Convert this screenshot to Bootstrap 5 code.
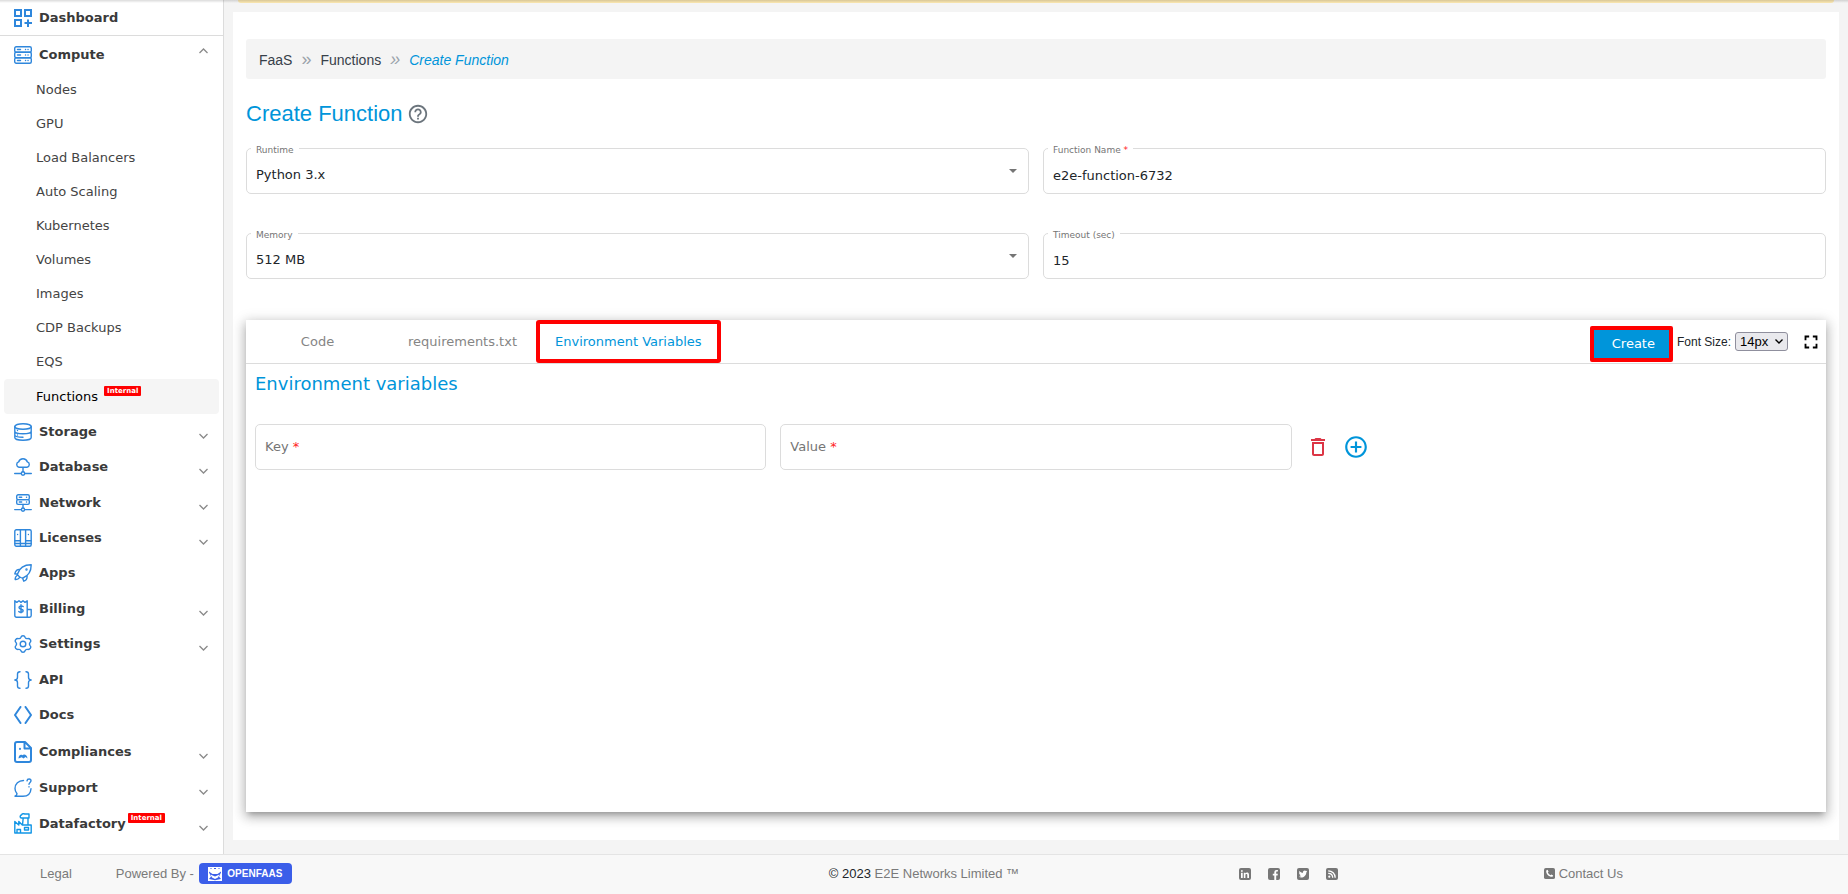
<!DOCTYPE html>
<html lang="en">
<head>
<meta charset="utf-8">
<meta name="viewport" content="width=device-width, initial-scale=1">
<title>Create Function</title>
<link href="https://cdn.jsdelivr.net/npm/bootstrap@5.3.0/dist/css/bootstrap.min.css" rel="stylesheet">
<style>
:root { --brand: #0095da; --line: #dcdcdc; --icon: #2f87dc; }
body { font: 13px/20px "DejaVu Sans", sans-serif; color: #212529; background: #f4f4f4; }
/* shadow cast by the header above the scrolled page */
body::before { content: ""; position: absolute; inset: 0 0 auto; height: 3px; background: linear-gradient(rgba(0,0,0,.14), rgba(0,0,0,0)); pointer-events: none; z-index: 5; }
.arial { font-family: "Liberation Sans", Arial, sans-serif; }
a { text-decoration: none; }

/* sidebar */
.sidebar { width: 224px; border-right: 1px solid var(--line); padding-bottom: 12px; }
.side-row { display: flex; align-items: center; padding: 0 15px 0 14px; color: #3a3a3a; font-weight: 700; }
.side-row .ico { width: 18px; flex: none; margin-right: 7px; color: var(--icon); fill: none; stroke: currentColor; stroke-width: 1.4; stroke-linejoin: round; stroke-linecap: round; }
.side-row .ico-square { stroke-width: 2; stroke-linejoin: miter; stroke-linecap: butt; }
.side-row .ico-bold { stroke-width: 2; }
.side-row .ico-factory { color: #1296e6; }
.side-row .chev { width: 9px; height: 6px; margin-left: auto; margin-top: 8px; fill: none; stroke: #8a8a8a; stroke-width: 1.3; }
.side-home { height: 36px; border-bottom: 1px solid var(--line); }
.side-open { height: 37px; }
.side-open .chev { margin-top: -7px; }
.side-sub a { display: flex; align-items: center; height: 34px; margin: 0 4px; padding-left: 32px; color: #444; border-radius: 4px; }
.side-sub a.current { height: 35px; background: #f5f5f5; color: #000; }
.tag { background: #f00; color: #fff; font-size: 7px; line-height: 10px; font-weight: 700; padding: 0 3px; border-radius: 1px; align-self: flex-start; }
.side-sub .tag { margin: 7px 0 0 6px; }
.side-row .tag { margin: 7px 0 0 2px; }

/* page */
.content { min-width: 0; padding: 0 9px 14px; }
.notice { height: 3px; margin: 0 5px 9px; background: #fbe7b0; border-radius: 0 0 3px 3px; }
.page { padding: 27px 13px 28px; }
.crumbs { --bs-breadcrumb-divider: "»"; --bs-breadcrumb-item-padding-x: 9px; --bs-breadcrumb-divider-color: #9aa2aa; height: 40px; padding: 2px 13px 0; background: #f4f4f4; border-radius: 3px; font-size: 14px; align-items: center; }
.crumbs .breadcrumb-item { display: flex; align-items: center; }
.crumbs .breadcrumb-item + .breadcrumb-item::before { font-size: 18px; line-height: 18px; margin-top: -2px; }
.crumbs a { color: #37404a; }
.crumbs .active { color: var(--brand); font-style: italic; }
.title-bar { height: 69px; }
.page-title { font-size: 22px; line-height: 26px; color: var(--brand); margin: 0; }
.form-grid { --bs-gutter-x: 14px; row-gap: 39px; }

.field { position: relative; height: 46px; }
.field .form-control, .field .form-select { height: 46px; padding: 8px 9px 0; font-size: 13px; border: 1px solid var(--line); border-radius: 5px; color: #212529; background-color: #fff; }
.field .form-select { background-image: url("data:image/svg+xml,%3Csvg xmlns='http://www.w3.org/2000/svg' viewBox='0 0 8 4'%3E%3Cpath fill='%23757575' d='M0 0h8L4 4z'/%3E%3C/svg%3E"); background-size: 8px 4px; background-position: right 11px center; }
.field label { position: absolute; left: 5px; top: -4px; padding: 0 5px; font-size: 9px; line-height: 12px; color: #757575; background: #fff; }
.field label.inside { top: 13px; font-size: 13px; line-height: 20px; background: none; pointer-events: none; }
.req { color: #f22; }

/* editor */
.editor { margin-top: 41px; box-shadow: 0 5px 5px -3px rgba(0,0,0,.2), 0 4px 10px 1px rgba(0,0,0,.2), 0 3px 14px 2px rgba(0,0,0,.12); }
.editor-head { height: 44px; border-bottom: 1px solid var(--line); }
.editor-tab { border: 0; background: none; padding: 0 19px; color: #858585; }
.editor-tab:first-child { min-width: 143px; }
.editor-tab.active { color: var(--brand); border: 4px solid #f00; border-radius: 3px; padding: 0 15px; }
.create-btn { height: 36px; padding: 0 14px 0 18px; border: 4px solid #f00; border-radius: 2px; background: var(--brand); color: #fff; }
.size-label { font-size: 12px; }
.size-select { width: 53px; height: 19px; padding: 0 4px; font-size: 13px; line-height: 17px; color: #000; border: 1px solid #8f8f9d; border-radius: 3px; appearance: none; background: #e9e9ed url("data:image/svg+xml,%3Csvg xmlns='http://www.w3.org/2000/svg' viewBox='0 0 8 5'%3E%3Cpath fill='none' stroke='%23000' stroke-width='1.4' d='M.5.5 4 4 7.500.5'/%3E%3C/svg%3E") no-repeat right 4px center / 8px 5px; }
.plain-btn { border: 0; background: none; padding: 0; display: flex; }
.env-body { padding: 0 9px; }
.env-title { font-size: 18px; line-height: 24px; color: var(--brand); margin: 0; padding: 8px 0; }
.env-row { --bs-gutter-x: 14px; padding-top: 20px; }
.row-actions { gap: 13px; }

/* footer */
.foot { display: grid; grid-template-columns: 71fr 43fr 30fr 29fr 12fr; align-items: center; height: 40px; padding-bottom: 2px; font-size: 13px; color: #7a7a7a; background: #f8f8f8; border-top: 1px solid #e4e4e4; }
.foot a { color: #7a7a7a; }
.foot-left { padding-left: 40px; }
.powered { margin: 0 5px 0 44px; }
.foot .faas { width: 93px; height: 21px; background: #3b5ee9; border-radius: 4px; color: #fff; font-size: 10px; font-weight: 700; gap: 5px; }
.social { gap: 17px; }
</style>
</head>
<body class="min-vh-100 d-flex flex-column">

<div class="d-flex flex-grow-1">
  <nav class="sidebar bg-white d-flex flex-column flex-shrink-0" aria-label="Main">
    <a class="side-row side-home" href="#">
      <svg class="ico ico-square" height="18" viewBox="0 0 18 18"><path d="M1 1h6v6H1zM11 1h6v6h-6zM1 11h6v6H1zM14 10.500v7.500M10.500 14H18"/></svg>
      Dashboard</a>
    <a class="side-row side-open" href="#">
      <svg class="ico" height="18" viewBox="0 0 18 18"><rect x=".7" y=".7" width="16.600" height="5.500" rx="1.500"/><rect x=".7" y="6.200" width="16.600" height="5.500" rx="1.500"/><rect x=".7" y="11.700" width="16.600" height="5.500" rx="1.500"/><path d="M3.500 3.500h3M11.500 3.500h.1M14 3.500h.1M3.500 9h3M11.500 9h.1M14 9h.1M3.500 14.500h3M11.500 14.500h.1M14 14.500h.1"/></svg>
      Compute<svg class="chev" viewBox="0 0 9 6"><path d="M.5 5 4.500 1l4 4"/></svg></a>
    <div class="side-sub">
      <a href="#">Nodes</a>
      <a href="#">GPU</a>
      <a href="#">Load Balancers</a>
      <a href="#">Auto Scaling</a>
      <a href="#">Kubernetes</a>
      <a href="#">Volumes</a>
      <a href="#">Images</a>
      <a href="#">CDP Backups</a>
      <a href="#">EQS</a>
      <a href="#" class="current">Functions<span class="tag">Internal</span></a>
    </div>
    <a class="side-row flex-fill" href="#">
      <svg class="ico" height="18" viewBox="0 0 18 18"><ellipse cx="9" cy="3.500" rx="8.200" ry="2.800"/><path d="M.8 3.500v11C.8 16 4.500 17.300 9 17.300s8.200-1.300 8.200-2.800v-11M.8 8.200C.8 9.700 4.500 10.700 9 10.700s8.200-1 8.200-2.500M.8 12.200c.5 1.200 3.700 2 8.200 2M3.500 7.500v.1M3.500 12v.1"/></svg>
      Storage<svg class="chev" viewBox="0 0 9 6"><path d="M.5 1l4 4 4-4"/></svg></a>
    <a class="side-row flex-fill" href="#">
      <svg class="ico" height="18" viewBox="0 0 18 18"><path d="M5 9.300a2.800 2.800 0 0 1-.4-5.400C5.300 1.900 7 .8 9 .8s3.700 1.100 4.400 3.100a2.800 2.800 0 0 1-.4 5.400zM9 9.300v4.500M.7 15.500h6.600M10.700 15.500h6.600"/><circle cx="9" cy="15.500" r="1.700"/></svg>
      Database<svg class="chev" viewBox="0 0 9 6"><path d="M.5 1l4 4 4-4"/></svg></a>
    <a class="side-row flex-fill" href="#">
      <svg class="ico" height="18" viewBox="0 0 18 18"><rect x="2.700" y=".8" width="12.600" height="4.800" rx="1.400"/><rect x="2.700" y="5.600" width="12.600" height="4.800" rx="1.400"/><path d="M5.300 3.200h2.400M12.500 3.200h.1M5.300 8h2.400M12.500 8h.1M9 10.400v3.400M.7 15.600h6.600M10.700 15.600h6.600"/><circle cx="9" cy="15.600" r="1.600"/></svg>
      Network<svg class="chev" viewBox="0 0 9 6"><path d="M.5 1l4 4 4-4"/></svg></a>
    <a class="side-row flex-fill" href="#">
      <svg class="ico" height="18" viewBox="0 0 18 18"><rect x=".8" y=".8" width="16.400" height="16.400" rx="1.500"/><path d="M6.400 1v16M11.600 1v16M1 11.800h5.400M11.600 11.800H17M1 14.500h5.400M6.400 14.500h5.200M11.600 14.500H17M3.600 5.500v.1M14.400 5.500v.1"/></svg>
      Licenses<svg class="chev" viewBox="0 0 9 6"><path d="M.5 1l4 4 4-4"/></svg></a>
    <a class="side-row flex-fill" href="#">
      <svg class="ico" height="18" viewBox="0 0 18 18"><path d="M3.500 10C5 5 9.500.8 17.200.8c0 6-3.200 11.200-8.200 13.200-1.500.5-6-2.500-5.500-4zM6 5.500C4 4.800 1.500 6.500.8 9.800l2.700.4M13 11.500c.4 2.700-.5 4.800-3.200 5.700L8.500 14M3 11.500c-1.200.8-2 2.200-1.800 4 1.800.2 3.300-.3 4.300-1.800"/><circle cx="12.500" cy="5.500" r=".5"/></svg>
      Apps</a>
    <a class="side-row flex-fill" href="#">
      <svg class="ico" height="18" viewBox="0 0 18 18"><path d="M13.200 17.200H2.500c-1 0-1.700-.7-1.700-1.700V.8l2 1.600L5 .8l2 1.600L9 .8l2 1.600L13.200.8zM13.200 9.500h4v6c0 1-.7 1.700-1.700 1.700h-2.300M9.200 6.600C8.700 5.900 5 5.500 5 7.600s4.200 1.200 4.200 3.100-3.500 2-4.400.8M7 4.800v8"/></svg>
      Billing<svg class="chev" viewBox="0 0 9 6"><path d="M.5 1l4 4 4-4"/></svg></a>
    <a class="side-row flex-fill" href="#">
      <svg class="ico" height="18" viewBox="0 0 18 18"><circle cx="9" cy="9" r="2.800"/><path d="M6.800 2.500C7.200 1.300 7.800.8 9 .8s1.800.5 2.200 1.700c.4.900 1.200 1.300 2.200 1.100 1.300-.2 2.200 0 2.900 1s.6 1.900-.2 2.800c-.8 1-.8 2.200 0 3.200.8.900.9 1.800.2 2.800s-1.600 1.200-2.900 1c-1-.2-1.800.2-2.200 1.100-.4 1.200-1 1.700-2.200 1.700s-1.800-.5-2.200-1.700c-.4-.9-1.200-1.300-2.200-1.100-1.300.2-2.200 0-2.900-1s-.6-1.900.2-2.800c.8-1 .8-2.200 0-3.200-.8-.9-.9-1.800-.2-2.800s1.600-1.200 2.900-1c1 .2 1.800-.2 2.200-1.100z"/></svg>
      Settings<svg class="chev" viewBox="0 0 9 6"><path d="M.5 1l4 4 4-4"/></svg></a>
    <a class="side-row flex-fill" href="#">
      <svg class="ico" height="18" viewBox="0 0 18 18"><path d="M6 .8C4 .8 3.500 1.700 3.500 3v3.300C3.500 8 2.500 9 .8 9c1.700 0 2.700 1 2.700 2.700V15c0 1.300.5 2.200 2.500 2.200M12 .8c2 0 2.500.9 2.500 2.200v3.300c0 1.700 1 2.700 2.700 2.700-1.700 0-2.700 1-2.700 2.700V15c0 1.300-.5 2.200-2.500 2.200"/></svg>
      API</a>
    <a class="side-row flex-fill" href="#">
      <svg class="ico ico-bold" height="18" viewBox="0 0 18 18"><path d="M6.500 1 1 9l5.500 8M11.500 1 17 9l-5.500 8"/></svg>
      Docs</a>
    <a class="side-row flex-fill" href="#">
      <svg class="ico ico-bold" height="22" viewBox="0 0 18 22"><path d="M11 1H3a2 2 0 0 0-2 2v16a2 2 0 0 0 2 2h12a2 2 0 0 0 2-2V7zM10.500 1v6.500H17M6 7.800v.2"/><path fill="currentColor" stroke="none" d="M4.500 17.500c0-3 2-4.500 3.800-3.300 2-1.500 5-.2 5.200 3.300l-2-1.500-2 1.500-1.800-1.200z"/></svg>
      Compliances<svg class="chev" viewBox="0 0 9 6"><path d="M.5 1l4 4 4-4"/></svg></a>
    <a class="side-row flex-fill" href="#">
      <svg class="ico" height="19" viewBox="0 0 18 19"><path d="M9.500 2.500C4.500 2.500 1 6 1 10.500c0 2 .8 3.800 2 5.200 0 1-.8 2-2 2.500h8c4.500 0 7.700-2.800 8-7.500M13 2.800c.3-2.500 4-2.500 4 0 0 1.600-2 1.700-2 3.500M15 8.800v.1"/></svg>
      Support<svg class="chev" viewBox="0 0 9 6"><path d="M.5 1l4 4 4-4"/></svg></a>
    <a class="side-row flex-fill" href="#">
      <svg class="ico ico-factory" height="21" viewBox="0 0 18 21"><path d="M.8 20V8.500l4 3.500V8.500l3.500 3.500h8.900v8zM8.500 12l.7-7M14 5v7M7.500 5c-2-.3-1.500-3 0-3C8 .5 10 .5 10.500 1H15v4zM10.500 14.500h4v2.500h-4zM3 20v-3.500h3.500V20"/></svg>
      Datafactory<span class="tag">Internal</span><svg class="chev" viewBox="0 0 9 6"><path d="M.5 1l4 4 4-4"/></svg></a>
  </nav>

  <main class="content flex-grow-1 d-flex flex-column">
    <div class="notice"></div>
    <section class="page bg-white flex-grow-1 d-flex flex-column">
      <nav aria-label="Breadcrumb">
        <ol class="breadcrumb crumbs arial mb-0">
          <li class="breadcrumb-item"><a href="#">FaaS</a></li>
          <li class="breadcrumb-item"><a href="#">Functions</a></li>
          <li class="breadcrumb-item active" aria-current="page">Create Function</li>
        </ol>
      </nav>
      <div class="title-bar d-flex align-items-center gap-1">
        <h1 class="page-title arial">Create Function</h1>
        <button class="plain-btn" type="button" aria-label="Help"><svg width="22" height="22" viewBox="0 0 24 24" fill="#6c757d"><path d="M11 18h2v-2h-2v2zm1-16C6.480 2 2 6.480 2 12s4.480 10 10 10 10-4.480 10-10S17.520 2 12 2zm0 18c-4.410 0-8-3.590-8-8s3.590-8 8-8 8 3.590 8 8-3.590 8-8 8zm0-14c-2.210 0-4 1.790-4 4h2c0-1.100.9-2 2-2s2 .9 2 2c0 2-3 1.750-3 5h2c0-2.250 3-2.500 3-5 0-2.210-1.790-4-4-4z"/></svg></button>
      </div>
      <div class="row form-grid">
        <div class="col-6"><div class="field">
          <select class="form-select" id="runtime"><option>Python 3.x</option></select>
          <label for="runtime">Runtime</label></div></div>
        <div class="col-6"><div class="field">
          <input class="form-control" id="fname" value="e2e-function-6732">
          <label for="fname">Function Name <span class="req">*</span></label></div></div>
        <div class="col-6"><div class="field">
          <select class="form-select" id="memory"><option>512 MB</option></select>
          <label for="memory">Memory</label></div></div>
        <div class="col-6"><div class="field">
          <input class="form-control" id="timeout" value="15">
          <label for="timeout">Timeout (sec)</label></div></div>
      </div>

      <div class="editor bg-white flex-grow-1">
        <div class="editor-head d-flex">
          <div class="d-flex" role="tablist">
            <button class="editor-tab" type="button" role="tab">Code</button>
            <button class="editor-tab" type="button" role="tab">requirements.txt</button>
            <button class="editor-tab active" type="button" role="tab" aria-selected="true">Environment Variables</button>
          </div>
          <div class="d-flex align-items-center gap-1 ms-auto">
            <button class="create-btn mt-1" type="button">Create</button>
            <label class="size-label arial" for="size">Font Size:</label>
            <select class="size-select arial" id="size"><option>14px</option></select>
            <button class="plain-btn ms-2 me-1" type="button" aria-label="Full screen"><svg width="22" height="22" viewBox="0 0 24 24"><path d="M7 14H5v5h5v-2H7v-3zm-2-4h2V7h3V5H5v5zm12 7h-3v2h5v-5h-2v3zM14 5v2h3v3h2V5h-5z"/></svg></button>
          </div>
        </div>
        <div class="env-body">
          <h2 class="env-title">Environment variables</h2>
          <div class="row env-row">
            <div class="col-4"><div class="field">
              <input class="form-control" id="key" required>
              <label class="inside" for="key">Key <span class="req">*</span></label></div></div>
            <div class="col-4"><div class="field">
              <input class="form-control" id="val" required>
              <label class="inside" for="val">Value <span class="req">*</span></label></div></div>
            <div class="col-4 d-flex align-items-center row-actions">
              <button class="plain-btn" type="button" aria-label="Delete"><svg width="24" height="24" viewBox="0 0 24 24" fill="#dc3545"><path d="M16 9v10H8V9h8m-1.500-6h-5l-1 1H5v2h14V4h-3.500l-1-1zM18 7H6v12c0 1.100.9 2 2 2h8c1.100 0 2-.9 2-2V7z"/></svg></button>
              <button class="plain-btn" type="button" aria-label="Add"><svg width="26" height="26" viewBox="0 0 24 24" fill="#0095da"><path d="M13 7h-2v4H7v2h4v4h2v-4h4v-2h-4V7zm-1-5C6.480 2 2 6.480 2 12s4.480 10 10 10 10-4.480 10-10S17.520 2 12 2zm0 18c-4.410 0-8-3.590-8-8s3.590-8 8-8 8 3.590 8 8-3.590 8-8 8z"/></svg></button>
            </div>
          </div>
        </div>
      </div>
    </section>
  </main>
</div>

<footer class="foot arial">
  <div class="foot-left d-flex align-items-center">
    <a href="#">Legal</a>
    <span class="powered">Powered By -</span>
    <a class="faas d-flex align-items-center justify-content-center" href="#">
      <svg width="14" height="14" viewBox="0 0 14 14"><path fill="#fff" d="M0 0h14v14H0z"/><path fill="#3b5ee9" d="M1 4.500 3 6l1.500 1h5L11 6l2-1.500v1L11 9.500l2 2.500-6 1.300L1 12l2-2.500-2-4zM2 1.500h2V2H2zM6 1h2v1H6zM10 1.500h2V2h-2z"/><path fill="#fff" d="M2.500 7.500 7 9.500l4.500-2L10 10.500 7 12l-3-1.500z"/></svg>
      OPENFAAS</a>
  </div>
  <div class="text-center"><span class="text-body">© 2023</span> <a href="#">E2E Networks Limited ™</a></div>
  <div class="social d-flex justify-content-center">
    <a class="d-flex" href="#" aria-label="LinkedIn"><svg width="12" height="12" viewBox="0 0 12 12"><rect width="12" height="12" rx="2" fill="#777"/><path fill="#fff" d="M2 4.700h1.700V10H2zM2 2.200h1.700v1.500H2zM4.800 4.700h1.600v.7c.8-1.200 3.600-1.200 3.600 1.300V10H8.300V7c0-1.300-1.900-1.300-1.900 0v3H4.800z"/></svg></a>
    <a class="d-flex" href="#" aria-label="Facebook"><svg width="12" height="12" viewBox="0 0 12 12"><rect width="12" height="12" rx="2" fill="#777"/><path fill="#fff" d="M6.300 12V7.500H4.800V5.700h1.500V4.400c0-1.700.9-2.500 2.300-2.500h1.300v1.700h-.8c-.7 0-.9.3-.9.900v1.200h1.600l-.2 1.800H8.200V12z"/></svg></a>
    <a class="d-flex" href="#" aria-label="Twitter"><svg width="12" height="12" viewBox="0 0 12 12"><rect width="12" height="12" rx="2" fill="#777"/><path fill="#fff" d="M10.200 3.500l-.9.900c0 3.800-4 6.200-7.500 4.400 1 0 1.800-.2 2.500-.7-.8-.1-1.400-.5-1.600-1.200h.7c-.8-.3-1.300-.9-1.300-1.800l.7.200C2 4.600 2 3.700 2.400 3c1 1.100 2.100 1.700 3.600 1.800-.3-2 1.900-2.900 3.100-1.700l1.100-.4-.7.900z"/></svg></a>
    <a class="d-flex" href="#" aria-label="RSS"><svg width="12" height="12" viewBox="0 0 12 12"><rect width="12" height="12" rx="2" fill="#777"/><circle cx="3.300" cy="8.700" r="1.100" fill="#fff"/><path fill="none" stroke="#fff" stroke-width="1.300" d="M2.200 5.300c2.700 0 4.500 1.800 4.500 4.500M2.200 2.800c4 0 7 3 7 7"/></svg></a>
  </div>
  <div class="d-flex justify-content-center"><a class="d-flex align-items-center gap-1" href="#"><svg width="11" height="11" viewBox="0 0 12 12"><rect width="12" height="12" rx="2" fill="#777"/><path fill="#fff" d="M3.900 2 2.400 2.700C2 6.500 5.500 10 9.300 9.600L10 8.100 8 7l-1 .9C5.700 7.300 4.700 6.300 4.100 5L5 4z"/></svg>Contact Us</a></div>
</footer>

<script src="https://cdn.jsdelivr.net/npm/bootstrap@5.3.0/dist/js/bootstrap.bundle.min.js"></script>
</body>
</html>
